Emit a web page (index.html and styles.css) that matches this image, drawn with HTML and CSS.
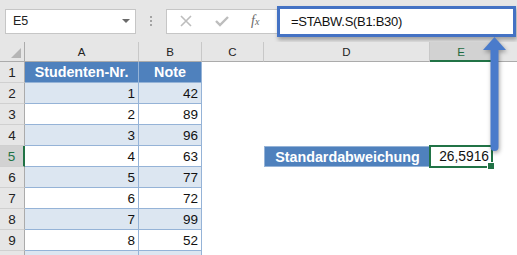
FILE: index.html
```html
<!DOCTYPE html>
<html lang="de">
<head>
    <meta charset="UTF-8">
    <title>STABW.S</title>
    <link rel="stylesheet" href="styles.css">
</head>
<body>
    <div class="app">
        <div class="formula-bar">
            <div class="name-box"><span>E5</span><span class="caret"></span></div>
            <div class="grip"><i></i><i></i><i></i></div>
            <div class="fx-box">
                <svg class="cancel" width="12" height="12" viewBox="0 0 12 12"><path d="M1 1L11 11M11 1L1 11" stroke="#bdbdbd" stroke-width="1.6" fill="none"/></svg>
                <svg class="enter" width="14" height="12" viewBox="0 0 14 12"><path d="M1 6L5 10L13 2" stroke="#bdbdbd" stroke-width="2.4" fill="none"/></svg>
                <span class="fx">f<sub>x</sub></span>
            </div>
            <div class="formula">=STABW.S(B1:B30)</div>
        </div>

        <div class="sheet">
            <!-- Spaltenköpfe -->
            <div class="corner"></div>
            <div class="ch">A</div>
            <div class="ch">B</div>
            <div class="ch">C</div>
            <div class="ch">D</div>
            <div class="ch active">E</div>
            <div class="ch last"></div>

            <div class="rh">1</div>
            <div class="c th">Studenten-Nr.</div>
            <div class="c th">Note</div>
            <div class="c"></div><div class="c"></div><div class="c"></div><div class="c"></div>

            <div class="rh">2</div>
            <div class="c tb band">1</div>
            <div class="c tb band">42</div>
            <div class="c"></div><div class="c"></div><div class="c"></div><div class="c"></div>

            <div class="rh">3</div>
            <div class="c tb">2</div>
            <div class="c tb">89</div>
            <div class="c"></div><div class="c"></div><div class="c"></div><div class="c"></div>

            <div class="rh">4</div>
            <div class="c tb band">3</div>
            <div class="c tb band">96</div>
            <div class="c"></div><div class="c"></div><div class="c"></div><div class="c"></div>

            <div class="rh active">5</div>
            <div class="c tb">4</div>
            <div class="c tb">63</div>
            <div class="c"></div>
            <div class="c lbl">Standardabweichung</div>
            <div class="c sel">26,5916</div>
            <div class="c"></div>

            <div class="rh">6</div>
            <div class="c tb band">5</div>
            <div class="c tb band">77</div>
            <div class="c"></div><div class="c"></div><div class="c"></div><div class="c"></div>

            <div class="rh">7</div>
            <div class="c tb">6</div>
            <div class="c tb">72</div>
            <div class="c"></div><div class="c"></div><div class="c"></div><div class="c"></div>

            <div class="rh">8</div>
            <div class="c tb band">7</div>
            <div class="c tb band">99</div>
            <div class="c"></div><div class="c"></div><div class="c"></div><div class="c"></div>

            <div class="rh">9</div>
            <div class="c tb">8</div>
            <div class="c tb">52</div>
            <div class="c"></div><div class="c"></div><div class="c"></div><div class="c"></div>

            <!-- Zeile 10 ist nur angeschnitten -->
            <div class="rh"></div>
            <div class="c tb band"></div>
            <div class="c tb band"></div>
            <div class="c"></div><div class="c"></div><div class="c"></div><div class="c"></div>
        </div>

        <!-- Pfeil von E5 zur Bearbeitungsleiste -->
        <svg class="arrow" width="30" height="120" viewBox="0 0 30 120">
            <path d="M13.5 12V110a4 4 0 0 0 8 0V12Z" fill="#4a7bcb"/>
            <path d="M17.5 0L6 13H29Z" fill="#4a7bcb"/>
        </svg>
    </div>
</body>
</html>
```

FILE: styles.css
```css
* {
    margin: 0;
    padding: 0;
    box-sizing: border-box;
}
body {
    background: #fff;
    font-family: "Liberation Sans", Arial, sans-serif;
    color: #111;
}
.app {
    position: relative;
    width: 517px;
    height: 255px;
    overflow: hidden;
}

/* Bearbeitungsleiste */
.formula-bar {
    height: 42px;
    background: #e6e6e6;
    display: flex;
    align-items: center;
    padding-left: 5px;
}
.name-box {
    width: 131px;
    height: 25px;
    background: #fff;
    border: 1px solid #c6c6c6;
    display: flex;
    align-items: center;
    justify-content: space-between;
    padding: 0 5px 0 7px;
    font-size: 12.5px;
    color: #222;
}
.caret {
    width: 0;
    height: 0;
    border-left: 4px solid transparent;
    border-right: 4px solid transparent;
    border-top: 4px solid #6a6a6a;
}
.grip {
    width: 30px;
    display: flex;
    flex-direction: column;
    align-items: center;
    gap: 2px;
}
.grip i {
    width: 2px;
    height: 2px;
    background: #a3a3a3;
}
.fx-box {
    width: 111px;
    height: 25px;
    background: #fff;
    border: 1px solid #c6c6c6;
    border-right: none;
    display: flex;
    align-items: center;
}
.cancel {
    margin-left: 13px;
}
.enter {
    margin-left: 23px;
}
.fx {
    margin-left: 22px;
    font-family: "Liberation Serif", serif;
    font-style: italic;
    font-size: 14px;
    color: #6a6a6a;
}
.fx sub {
    font-size: 10px;
    vertical-align: 0;
}
.formula {
    flex: 1;
    height: 31px;
    margin-right: 1px;
    background: #fff;
    border: 3px solid #4472c4;
    box-shadow: 1px 3px 4px rgba(0, 0, 0, .3);
    display: flex;
    align-items: center;
    padding-left: 11px;
    font-size: 13px;
    letter-spacing: -.3px;
    color: #111;
}

/* Tabellenblatt */
.sheet {
    display: grid;
    grid-template-columns: 25px 114px 63px 62px 166px 63px 1fr;
    grid-template-rows: 20px;
    grid-auto-rows: 21px;
}
.corner {
    background: #e6e6e6;
    border-right: 1px solid #ababab;
    border-bottom: 1px solid #ababab;
    display: flex;
    align-items: flex-end;
    justify-content: flex-end;
    padding: 0 3px 3px 0;
}
.corner:after {
    content: "";
    width: 10px;
    height: 10px;
    background: #b5b5b5;
    clip-path: polygon(100% 0, 100% 100%, 0 100%);
}
.ch {
    background: #e6e6e6;
    border-right: 1px solid #c8c8c8;
    border-bottom: 1px solid #ababab;
    font-size: 11.5px;
    color: #222;
    display: flex;
    align-items: center;
    justify-content: center;
    padding-top: 1px;
}
.ch.active {
    background: #d2d2d2;
    color: #1e6b41;
    border-bottom: 2px solid #217346;
}
.ch.last {
    border-right: none;
}
.rh {
    background: #e6e6e6;
    border-right: 1px solid #ababab;
    border-bottom: 1px solid #d0d0d0;
    font-size: 13.5px;
    color: #222;
    display: flex;
    align-items: center;
    justify-content: center;
}
.rh.active {
    background: #d2d2d2;
    color: #217346;
    border-right: 2px solid #217346;
}
.c {
    display: flex;
    align-items: center;
    font-size: 13.5px;
    white-space: nowrap;
}
.th {
    background: #4f81bd;
    color: #fff;
    font-weight: bold;
    font-size: 14.3px;
    justify-content: center;
    border-right: 1px solid #95b3d7;
    border-bottom: 1px solid #95b3d7;
}
.tb {
    justify-content: flex-end;
    padding-right: 3px;
    border-right: 1px solid #95b3d7;
    border-bottom: 1px solid #95b3d7;
}
.band {
    background: #dce6f1;
}
.lbl {
    background: #4f81bd;
    color: #fff;
    font-weight: bold;
    font-size: 14.3px;
    justify-content: center;
    border: 1px solid #95b3d7;
    border-right: none;
}
.sel {
    position: relative;
    justify-content: flex-end;
    padding-right: 2px;
    font-size: 13.8px;
    border: 2px solid #217346;
    margin: -1px 0 -1px -1px;
}
.sel:after {
    content: "";
    position: absolute;
    right: -4px;
    bottom: -4px;
    width: 6px;
    height: 6px;
    background: #217346;
    border: 1px solid #fff;
}

/* Hinweispfeil */
.arrow {
    position: absolute;
    left: 477px;
    top: 37px;
    filter: drop-shadow(1px 2px 2px rgba(0, 0, 0, .35));
}
```
